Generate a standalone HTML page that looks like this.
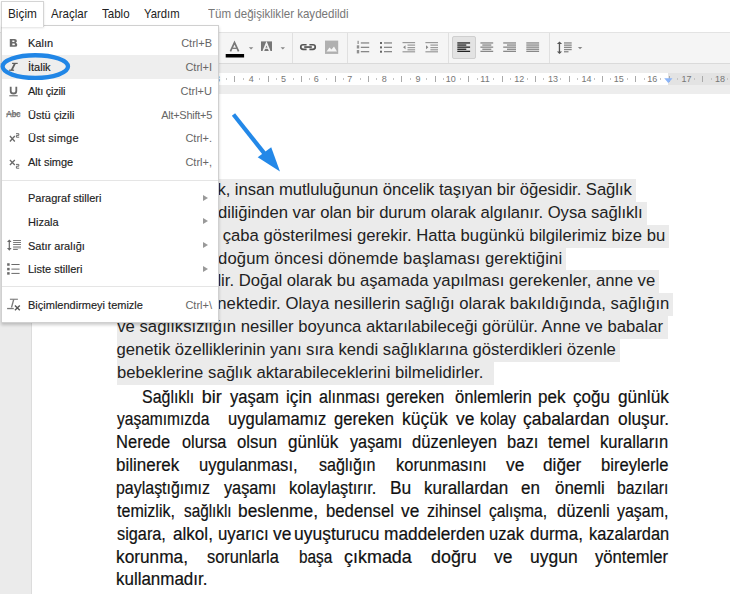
<!DOCTYPE html>
<html><head><meta charset="utf-8">
<style>
*{margin:0;padding:0;box-sizing:border-box}
html,body{width:730px;height:594px;overflow:hidden;background:#fff;position:relative;font-family:"Liberation Sans",sans-serif}
.a{position:absolute;white-space:pre}
.mb{position:absolute;white-space:pre;font-size:12.7px;line-height:16px;top:6px;color:#222;transform-origin:0 0}
#toolbar{position:absolute;left:0;top:32px;width:730px;height:32px;background:#f5f5f5;border-top:1px solid #e3e3e3;border-bottom:1px solid #dadada}
.sep{position:absolute;top:33px;width:1px;height:30px;background:#e0e0e0}
#band{position:absolute;left:0;top:64px;width:730px;height:29.5px;background:#ededed}
#ruler{position:absolute;left:117px;top:72.8px;width:551px;height:12.6px;background:#fff}
#rulerR{position:absolute;left:668px;top:72.8px;width:62px;height:12.6px;background:#e3e3e3}
#pagebg{position:absolute;left:0;top:93.5px;width:32px;height:501px;background:#ebebeb;border-right:1px solid #dcdcdc}
.rn{position:absolute;top:74px;font-size:9px;line-height:10px;color:#777;width:20px;text-align:center}
.rt{position:absolute;top:76px;width:1px;height:6px;background:#aaa}
.rd{position:absolute;top:78px;width:1px;height:2px;background:#c4c4c4}
.hl{position:absolute;left:117px;height:22.86px;background:#ebebeb}
.tl{position:absolute;font-size:16.67px;line-height:22.86px;color:#222;white-space:pre}
.w2{position:absolute;white-space:pre;font-size:18px;line-height:22.86px;color:#111;-webkit-text-stroke:0.2px #111;transform-origin:0 0}
.pl{text-align:justify;text-align-last:justify;height:22.86px}
.pl.last{text-align-last:left}
#menu{position:absolute;left:1px;top:25px;width:218px;height:298px;background:#fff;border:1px solid #d0d0d0;box-shadow:0 2px 3px rgba(0,0,0,0.2)}
#tab{position:absolute;left:1px;top:1px;width:43px;height:26px;background:#fff;border:1px solid #d4d4d4;border-bottom:none;z-index:5;box-shadow:0 1px 2px rgba(0,0,0,0.12)}
.mi{position:absolute;left:26px;font-size:11px;color:#222;line-height:14px;white-space:pre;-webkit-text-stroke:0.15px #222}
.sc{position:absolute;right:6px;font-size:11px;color:#666;line-height:14px;text-align:right;white-space:pre}
.ar{position:absolute;left:201px;width:0;height:0;border-left:5px solid #999;border-top:3px solid transparent;border-bottom:3px solid transparent}
.msep{position:absolute;left:0;width:216px;height:1px;background:#e5e5e5}
</style></head><body>
<div class="mb" style="left:51.3px;color:#222;transform:scaleX(0.91)">Araçlar</div>
<div class="mb" style="left:102px;color:#222;transform:scaleX(0.91)">Tablo</div>
<div class="mb" style="left:143.8px;color:#222;transform:scaleX(0.89)">Yardım</div>
<div class="mb" style="left:208px;color:#777;transform:scaleX(0.91)">Tüm değişiklikler kaydedildi</div>
<div id="toolbar"></div>
<div class="sep" style="left:292px"></div>
<div class="sep" style="left:347px"></div>
<div class="sep" style="left:448px"></div>
<div class="sep" style="left:549px"></div>
<div class="a" style="left:452px;top:36px;width:24px;height:23px;background:#e3e3e3;border:1px solid #cfcfcf;border-radius:2px"></div>
<svg class="a" style="left:0;top:0" width="730" height="94" viewBox="0 0 730 94"><path d="M230.4,51.3 L234.5,42.6 L238.6,51.3" fill="none" stroke="#777" stroke-width="1.7"/><path d="M232.2,48.3 H236.8" stroke="#777" stroke-width="1.3"/><rect x="225.7" y="54" width="18.4" height="3.5" fill="#000"/><polygon points="248.8,47.3 253.3,47.3 251.05,49.6" fill="#888"/><rect x="261" y="41.4" width="11" height="9.6" fill="#777"/><path d="M263.3,51 L266.5,43.2 L269.7,51" fill="none" stroke="#f3f3f3" stroke-width="1.7"/><path d="M264.8,48.2 H268.2" stroke="#f3f3f3" stroke-width="1.2"/><polygon points="280.6,47.3 285,47.3 282.8,49.6" fill="#888"/><g fill="none" stroke="#555" stroke-width="1.7"><path d="M306.6,44.75 H303.05 A2.3,2.3 0 0 0 303.05,49.35 H306.6"/><path d="M309.4,44.75 H312.95 A2.3,2.3 0 0 1 312.95,49.35 H309.4"/><path d="M304.2,47.05 H311.8"/></g><rect x="325" y="40.6" width="13.2" height="13.3" fill="#b0b0b0"/><polygon points="326.5,51.5 329.5,47.5 331.5,49.5 334,46.5 337,51.5" fill="#f5f5f5"/><g fill="#888"><rect x="360.8" y="42.3" width="8.4" height="1.3"/><rect x="360.8" y="46.7" width="8.4" height="1.3"/><rect x="360.8" y="51" width="8.4" height="1.3"/></g><g fill="#777"><rect x="357.6" y="40.8" width="1" height="3.2"/><rect x="356.8" y="45.3" width="2.4" height="3.2" opacity="0.8"/><rect x="356.8" y="50" width="2.4" height="3.4" opacity="0.8"/></g><g fill="#888"><rect x="384" y="42.3" width="8" height="1.3"/><rect x="384" y="46.7" width="8" height="1.3"/><rect x="384" y="51" width="8" height="1.3"/></g><g fill="#666"><rect x="380" y="42" width="2" height="2"/><rect x="380" y="46.4" width="2" height="2"/><rect x="380" y="50.7" width="2" height="2"/></g><g fill="#999"><rect x="402.5" y="42" width="12.6" height="1.2"/><rect x="407.5" y="44.5" width="7.6" height="1.2"/><rect x="407.5" y="47" width="7.6" height="1.2"/><rect x="407.5" y="49.2" width="7.6" height="1.2"/><rect x="402.5" y="51.2" width="12.6" height="1.2"/></g><polygon points="405.5,45.2 405.5,49.2 403.1,47.2" fill="#888"/><g fill="#999"><rect x="425.4" y="42" width="12.6" height="1.2"/><rect x="430.4" y="44.5" width="7.6" height="1.2"/><rect x="430.4" y="47" width="7.6" height="1.2"/><rect x="430.4" y="49.2" width="7.6" height="1.2"/><rect x="425.4" y="51.2" width="12.6" height="1.2"/></g><polygon points="426.0,45.2 426.0,49.2 428.4,47.2" fill="#888"/><rect x="457.30" y="42.3" width="12.8" height="1.3" fill="#222"/><rect x="457.30" y="44.4" width="9" height="1.3" fill="#222"/><rect x="457.30" y="46.5" width="12.8" height="1.3" fill="#222"/><rect x="457.30" y="48.6" width="9" height="1.3" fill="#222"/><rect x="457.30" y="50.7" width="12.8" height="1.3" fill="#222"/><rect x="480.40" y="42.3" width="12.8" height="1.3" fill="#888"/><rect x="482.30" y="44.4" width="9" height="1.3" fill="#888"/><rect x="480.40" y="46.5" width="12.8" height="1.3" fill="#888"/><rect x="482.30" y="48.6" width="9" height="1.3" fill="#888"/><rect x="480.40" y="50.7" width="12.8" height="1.3" fill="#888"/><rect x="503.20" y="42.3" width="12.8" height="1.3" fill="#888"/><rect x="507.00" y="44.4" width="9" height="1.3" fill="#888"/><rect x="503.20" y="46.5" width="12.8" height="1.3" fill="#888"/><rect x="507.00" y="48.6" width="9" height="1.3" fill="#888"/><rect x="503.20" y="50.7" width="12.8" height="1.3" fill="#888"/><rect x="526.30" y="42.3" width="12.8" height="1.3" fill="#888"/><rect x="526.30" y="44.4" width="12.8" height="1.3" fill="#888"/><rect x="526.30" y="46.5" width="12.8" height="1.3" fill="#888"/><rect x="526.30" y="48.6" width="12.8" height="1.3" fill="#888"/><rect x="526.30" y="50.7" width="12.8" height="1.3" fill="#888"/><g fill="#555"><rect x="558.8" y="43" width="1.3" height="9"/><polygon points="556.9,44 562.1,44 559.5,41.5"/><polygon points="556.9,51.5 562.1,51.5 559.5,54"/></g><g fill="#888"><rect x="564" y="42.3" width="7.7" height="1.3"/><rect x="564" y="44.5" width="7.7" height="1.3"/><rect x="564" y="46.7" width="7.7" height="1.3"/><rect x="564" y="48.9" width="7.7" height="1.3"/><rect x="564" y="51.1" width="4.5" height="1.3"/></g><polygon points="577.9,47 582.3,47 580.1,49.2" fill="#888"/></svg>
<div id="band"></div><div id="ruler"></div><div id="rulerR"></div>
<div class="rd" style="left:125.6px"></div>
<div class="rt" style="left:133.9px"></div>
<div class="rd" style="left:142.3px"></div>
<div class="rn" style="left:140.6px">1</div>
<div class="rd" style="left:159.0px"></div>
<div class="rt" style="left:167.3px"></div>
<div class="rd" style="left:175.7px"></div>
<div class="rn" style="left:174.1px">2</div>
<div class="rd" style="left:192.4px"></div>
<div class="rt" style="left:200.8px"></div>
<div class="rd" style="left:209.1px"></div>
<div class="rn" style="left:207.5px">3</div>
<div class="rd" style="left:225.8px"></div>
<div class="rt" style="left:234.2px"></div>
<div class="rd" style="left:242.6px"></div>
<div class="rn" style="left:241.2px">4</div>
<div class="rd" style="left:259.3px"></div>
<div class="rt" style="left:267.6px"></div>
<div class="rd" style="left:276.0px"></div>
<div class="rn" style="left:273.4px">5</div>
<div class="rd" style="left:292.7px"></div>
<div class="rt" style="left:301.1px"></div>
<div class="rd" style="left:309.4px"></div>
<div class="rn" style="left:306.3px">6</div>
<div class="rd" style="left:326.1px"></div>
<div class="rt" style="left:334.5px"></div>
<div class="rd" style="left:342.9px"></div>
<div class="rn" style="left:339.8px">7</div>
<div class="rd" style="left:359.6px"></div>
<div class="rt" style="left:367.9px"></div>
<div class="rd" style="left:376.3px"></div>
<div class="rn" style="left:374.2px">8</div>
<div class="rd" style="left:393.0px"></div>
<div class="rt" style="left:401.4px"></div>
<div class="rd" style="left:409.7px"></div>
<div class="rn" style="left:407.9px">9</div>
<div class="rd" style="left:426.4px"></div>
<div class="rt" style="left:434.8px"></div>
<div class="rd" style="left:443.1px"></div>
<div class="rn" style="left:440.8px">10</div>
<div class="rd" style="left:459.9px"></div>
<div class="rt" style="left:468.2px"></div>
<div class="rd" style="left:476.6px"></div>
<div class="rn" style="left:475.0px">11</div>
<div class="rd" style="left:493.3px"></div>
<div class="rt" style="left:501.6px"></div>
<div class="rd" style="left:510.0px"></div>
<div class="rn" style="left:509.3px">12</div>
<div class="rd" style="left:526.7px"></div>
<div class="rt" style="left:535.1px"></div>
<div class="rd" style="left:543.4px"></div>
<div class="rn" style="left:543.0px">13</div>
<div class="rd" style="left:560.1px"></div>
<div class="rt" style="left:568.5px"></div>
<div class="rd" style="left:576.9px"></div>
<div class="rn" style="left:576.4px">14</div>
<div class="rd" style="left:593.6px"></div>
<div class="rt" style="left:601.9px"></div>
<div class="rd" style="left:610.3px"></div>
<div class="rn" style="left:608.7px">15</div>
<div class="rd" style="left:627.0px"></div>
<div class="rt" style="left:635.4px"></div>
<div class="rd" style="left:643.7px"></div>
<div class="rn" style="left:642.2px">16</div>
<div class="rd" style="left:660.4px"></div>
<div class="rt" style="left:668.8px"></div>
<div class="rd" style="left:677.2px"></div>
<div class="rn" style="left:676.6px">17</div>
<div class="rd" style="left:693.9px"></div>
<div class="rt" style="left:702.2px"></div>
<div class="rd" style="left:710.6px"></div>
<div class="rn" style="left:710.1px">18</div>
<div class="rd" style="left:727.3px"></div>
<svg class="a" style="left:0;top:0" width="730" height="94"><polygon points="664.2,78.2 672.5,78.2 668.35,83" fill="#8ab4f8"/></svg>
<div id="pagebg"></div>
<div class="hl" style="top:179.00px;width:518.9px"></div>
<div class="hl" style="top:201.86px;width:529.9px"></div>
<div class="hl" style="top:224.72px;width:551.9px"></div>
<div class="hl" style="top:247.58px;width:449.0px"></div>
<div class="hl" style="top:270.44px;width:542.0px"></div>
<div class="hl" style="top:293.30px;width:556.2px"></div>
<div class="hl" style="top:316.16px;width:551.1px"></div>
<div class="hl" style="top:339.02px;width:502.9px"></div>
<div class="hl" style="top:361.88px;width:376.8px"></div>
<div class="tl" style="top:179.00px;left:217.38px;letter-spacing:-0.054px">k, insan mutluluğunun öncelik taşıyan bir öğesidir. Sağlık</div>
<div class="tl" style="top:201.86px;left:218.00px;letter-spacing:-0.037px">diliğinden var olan bir durum olarak algılanır. Oysa sağlıklı</div>
<div class="tl" style="top:224.72px;left:222.69px;letter-spacing:0.000px">çaba gösterilmesi gerekir. Hatta bugünkü bilgilerimiz bize bu</div>
<div class="tl" style="top:247.58px;left:218.00px;letter-spacing:0.129px">doğum öncesi dönemde başlaması gerektiğini</div>
<div class="tl" style="top:270.44px;left:217.38px;letter-spacing:-0.002px">lir. Doğal olarak bu aşamada yapılması gerekenler, anne ve</div>
<div class="tl" style="top:293.30px;left:217.29px;letter-spacing:0.063px">nektedir. Olaya nesillerin sağlığı olarak bakıldığında, sağlığın</div>
<div class="tl" style="top:316.16px;left:117.24px;letter-spacing:0.019px">ve sağlıksızlığın nesiller boyunca aktarılabileceği görülür. Anne ve babalar</div>
<div class="tl" style="top:339.02px;left:116.60px;letter-spacing:-0.010px">genetik özelliklerinin yanı sıra kendi sağlıklarına gösterdikleri özenle</div>
<div class="tl" style="top:361.88px;left:116.93px;letter-spacing:0.033px">bebeklerine sağlık aktarabileceklerini bilmelidirler.</div>
<div class="w2" style="left:142.12px;top:385.50px;transform:scaleX(0.886)">Sağlıklı</div>
<div class="w2" style="left:201.73px;top:385.50px;transform:scaleX(1.000)">bir</div>
<div class="w2" style="left:230.12px;top:385.50px;transform:scaleX(0.921)">yaşam</div>
<div class="w2" style="left:285.76px;top:385.50px;transform:scaleX(0.961)">için</div>
<div class="w2" style="left:318.76px;top:385.50px;transform:scaleX(0.895)">alınması</div>
<div class="w2" style="left:386.07px;top:385.50px;transform:scaleX(0.897)">gereken</div>
<div class="w2" style="left:454.85px;top:385.50px;transform:scaleX(0.924)">önlemlerin</div>
<div class="w2" style="left:538.29px;top:385.50px;transform:scaleX(0.947)">pek</div>
<div class="w2" style="left:573.33px;top:385.50px;transform:scaleX(0.944)">çoğu</div>
<div class="w2" style="left:617.93px;top:385.50px;transform:scaleX(0.959)">günlük</div>
<div class="w2" style="left:117.24px;top:408.36px;transform:scaleX(0.863)">yaşamımızda</div>
<div class="w2" style="left:227.54px;top:408.36px;transform:scaleX(0.918)">uygulamamız</div>
<div class="w2" style="left:334.45px;top:408.36px;transform:scaleX(0.923)">gereken</div>
<div class="w2" style="left:401.95px;top:408.36px;transform:scaleX(0.971)">küçük</div>
<div class="w2" style="left:455.70px;top:408.36px;transform:scaleX(0.969)">ve</div>
<div class="w2" style="left:479.89px;top:408.36px;transform:scaleX(0.859)">kolay</div>
<div class="w2" style="left:522.62px;top:408.36px;transform:scaleX(0.970)">çabalardan</div>
<div class="w2" style="left:617.92px;top:408.36px;transform:scaleX(0.962)">oluşur.</div>
<div class="w2" style="left:116.16px;top:431.22px;transform:scaleX(0.919)">Nerede</div>
<div class="w2" style="left:181.66px;top:431.22px;transform:scaleX(0.905)">olursa</div>
<div class="w2" style="left:237.25px;top:431.22px;transform:scaleX(0.931)">olsun</div>
<div class="w2" style="left:288.33px;top:431.22px;transform:scaleX(0.950)">günlük</div>
<div class="w2" style="left:349.83px;top:431.22px;transform:scaleX(0.901)">yaşamı</div>
<div class="w2" style="left:411.76px;top:431.22px;transform:scaleX(0.923)">düzenleyen</div>
<div class="w2" style="left:507.23px;top:431.22px;transform:scaleX(0.918)">bazı</div>
<div class="w2" style="left:548.30px;top:431.22px;transform:scaleX(0.949)">temel</div>
<div class="w2" style="left:600.21px;top:431.22px;transform:scaleX(0.920)">kuralların</div>
<div class="w2" style="left:116.30px;top:454.08px;transform:scaleX(0.944)">bilinerek</div>
<div class="w2" style="left:199.34px;top:454.08px;transform:scaleX(0.921)">uygulanması,</div>
<div class="w2" style="left:318.76px;top:454.08px;transform:scaleX(0.894)">sağlığın</div>
<div class="w2" style="left:395.52px;top:454.08px;transform:scaleX(0.915)">korunmasını</div>
<div class="w2" style="left:505.60px;top:454.08px;transform:scaleX(0.963)">ve</div>
<div class="w2" style="left:543.14px;top:454.08px;transform:scaleX(0.958)">diğer</div>
<div class="w2" style="left:601.12px;top:454.08px;transform:scaleX(0.925)">bireylerle</div>
<div class="w2" style="left:116.37px;top:476.94px;transform:scaleX(0.886)">paylaştığımız</div>
<div class="w2" style="left:224.43px;top:476.94px;transform:scaleX(0.901)">yaşamı</div>
<div class="w2" style="left:289.03px;top:476.94px;transform:scaleX(0.910)">kolaylaştırır.</div>
<div class="w2" style="left:389.78px;top:476.94px;transform:scaleX(0.968)">Bu</div>
<div class="w2" style="left:423.68px;top:476.94px;transform:scaleX(0.946)">kurallardan</div>
<div class="w2" style="left:521.43px;top:476.94px;transform:scaleX(0.943)">en</div>
<div class="w2" style="left:554.64px;top:476.94px;transform:scaleX(0.940)">önemli</div>
<div class="w2" style="left:617.49px;top:476.94px;transform:scaleX(0.871)">bazıları</div>
<div class="w2" style="left:117.22px;top:499.80px;transform:scaleX(0.891)">temizlik,</div>
<div class="w2" style="left:184.19px;top:499.80px;transform:scaleX(0.850)">sağlıklı</div>
<div class="w2" style="left:237.87px;top:499.80px;transform:scaleX(0.963)">beslenme,</div>
<div class="w2" style="left:325.71px;top:499.80px;transform:scaleX(0.930)">bedensel</div>
<div class="w2" style="left:400.90px;top:499.80px;transform:scaleX(0.963)">ve</div>
<div class="w2" style="left:426.80px;top:499.80px;transform:scaleX(0.900)">zihinsel</div>
<div class="w2" style="left:489.09px;top:499.80px;transform:scaleX(0.865)">çalışma,</div>
<div class="w2" style="left:556.66px;top:499.80px;transform:scaleX(0.922)">düzenli</div>
<div class="w2" style="left:617.43px;top:499.80px;transform:scaleX(0.886)">yaşam,</div>
<div class="w2" style="left:116.85px;top:522.66px;transform:scaleX(0.905)">sigara,</div>
<div class="w2" style="left:172.72px;top:522.66px;transform:scaleX(0.949)">alkol,</div>
<div class="w2" style="left:217.52px;top:522.66px;transform:scaleX(0.936)">uyarıcı</div>
<div class="w2" style="left:273.20px;top:522.66px;transform:scaleX(0.969)">ve</div>
<div class="w2" style="left:293.98px;top:522.66px;transform:scaleX(0.971)">uyuşturucu</div>
<div class="w2" style="left:383.75px;top:522.66px;transform:scaleX(0.961)">maddelerden</div>
<div class="w2" style="left:488.54px;top:522.66px;transform:scaleX(0.921)">uzak</div>
<div class="w2" style="left:529.65px;top:522.66px;transform:scaleX(0.945)">durma,</div>
<div class="w2" style="left:588.73px;top:522.66px;transform:scaleX(0.911)">kazalardan</div>
<div class="w2" style="left:116.26px;top:545.52px;transform:scaleX(0.959)">korunma,</div>
<div class="w2" style="left:206.54px;top:545.52px;transform:scaleX(0.909)">sorunlarla</div>
<div class="w2" style="left:299.11px;top:545.52px;transform:scaleX(0.854)">başa</div>
<div class="w2" style="left:344.40px;top:545.52px;transform:scaleX(0.997)">çıkmada</div>
<div class="w2" style="left:430.91px;top:545.52px;transform:scaleX(0.993)">doğru</div>
<div class="w2" style="left:494.30px;top:545.52px;transform:scaleX(0.969)">ve</div>
<div class="w2" style="left:529.58px;top:545.52px;transform:scaleX(0.972)">uygun</div>
<div class="w2" style="left:595.32px;top:545.52px;transform:scaleX(0.924)">yöntemler</div>
<div class="w2" style="left:116.28px;top:568.38px;transform:scaleX(0.942)">kullanmadır.</div>
<svg class="a" style="left:0;top:0" width="730" height="594"><line x1="234.8" y1="116.2" x2="265.8" y2="155.2" stroke="#2388e8" stroke-width="4.2" stroke-linecap="square"/><polygon points="257.7,157.3 271.2,147.2 280,171.4" fill="#2388e8"/></svg>
<div id="tab"><div class="mb" style="left:5.8px;top:4px;transform:scaleX(0.93)">Biçim</div></div>
<div id="menu">
<div style="position:absolute;left:0;top:29px;width:216px;height:23.5px;background:#eeeeee"></div>
<div class="mi" style="top:10.1px">Kalın</div><div class="sc" style="top:10.1px">Ctrl+B</div>
<div class="mi" style="top:33.9px">İtalik</div><div class="sc" style="top:33.9px">Ctrl+I</div>
<div class="mi" style="top:57.7px;letter-spacing:-0.23px">Altı çizili</div><div class="sc" style="top:57.7px">Ctrl+U</div>
<div class="mi" style="top:81.5px">Üstü çizili</div><div class="sc" style="top:81.5px;letter-spacing:-0.27px">Alt+Shift+5</div>
<div class="mi" style="top:105.3px;letter-spacing:0.2px">Üst simge</div><div class="sc" style="top:105.3px">Ctrl+.</div>
<div class="mi" style="top:129.1px">Alt simge</div><div class="sc" style="top:129.1px">Ctrl+,</div>
<div class="msep" style="top:153.5px"></div>
<div class="mi" style="top:164.9px">Paragraf stilleri</div><div class="ar" style="top:168.5px"></div>
<div class="mi" style="top:188.7px">Hizala</div><div class="ar" style="top:192.3px"></div>
<div class="mi" style="top:212.5px">Satır aralığı</div><div class="ar" style="top:216.1px"></div>
<div class="mi" style="top:236.3px">Liste stilleri</div><div class="ar" style="top:239.9px"></div>
<div class="msep" style="top:260.3px"></div>
<div class="mi" style="top:271.7px">Biçimlendirmeyi temizle</div><div class="sc" style="top:271.7px">Ctrl+\</div>
</div>
<svg class="a" style="left:0;top:0;z-index:10" width="730" height="594"><path fill-rule="evenodd" fill="#6a6a6a" d="M9.8,39 H14.5 Q16.9,39 16.9,40.9 Q16.9,42.2 15.7,42.75 Q17.3,43.3 17.3,44.9 Q17.3,46.8 14.8,46.8 H9.8 Z M12.3,40.5 V42.1 H14 Q14.6,42.1 14.6,41.3 Q14.6,40.5 14,40.5 Z M12.3,43.5 V45.3 H14.2 Q14.9,45.3 14.9,44.4 Q14.9,43.5 14.2,43.5 Z"/><g fill="#5e5e5e"><rect x="12.1" y="62.8" width="5.6" height="1.2"/><rect x="9.1" y="69.6" width="5" height="1.2"/><polygon points="13.9,63.5 15.9,63.5 12.6,70.2 10.6,70.2"/></g><path d="M10.7,86.7 V90.9 Q10.7,93.5 13.5,93.5 Q16.3,93.5 16.3,90.9 V86.7" fill="none" stroke="#6a6a6a" stroke-width="1.8"/><rect x="9.3" y="95" width="8.4" height="1.4" fill="#8a8a8a"/><text x="6.2" y="116.7" font-family="Liberation Sans" font-size="8.6" fill="#6a6a6a" stroke="#6a6a6a" stroke-width="0.25" textLength="14.2" lengthAdjust="spacingAndGlyphs">Abc</text><rect x="6" y="113.6" width="14.4" height="0.9" fill="#6a6a6a"/><g stroke="#6a6a6a" stroke-width="1.3" fill="none"><path d="M9.9,136 L14.8,141.5 M14.8,136 L9.9,141.5"/><path d="M9.9,160 L14.8,165 M14.8,160 L9.9,165"/></g><g stroke="#6a6a6a" stroke-width="1" fill="none"><polyline points="16,133.7 18.8,133.7 18.8,135.4 16.4,135.4 16.4,137.2 19.2,137.2"/><polyline points="16,164.4 18.8,164.4 18.8,166.2 16.4,166.2 16.4,168.2 19.2,168.2"/></g><g fill="#666"><polygon points="7,242.1 11.6,242.1 9.3,239.4"/><rect x="8.7" y="242" width="1.2" height="6.2"/><polygon points="7,248.1 11.6,248.1 9.3,250.8"/></g><g fill="#6e6e6e"><rect x="13.1" y="240" width="7.9" height="0.9"/><rect x="13.1" y="242" width="7.9" height="0.9"/><rect x="13.1" y="244" width="7.9" height="0.9"/><rect x="13.1" y="246.1" width="7.9" height="2.4" fill="#b0b0b0"/><rect x="13.1" y="249.1" width="4.7" height="0.9"/></g><g fill="#6a6a6a"><rect x="7.15" y="263.25" width="2.5" height="2.5"/><rect x="7.15" y="267.85" width="2.5" height="2.5"/><rect x="7.15" y="272.15" width="2.5" height="2.5"/><rect x="11.4" y="264" width="8.2" height="1"/><rect x="11.4" y="268.6" width="8.2" height="1"/><rect x="11.4" y="272.9" width="8.2" height="1"/></g><g fill="#7a7a7a"><rect x="9.9" y="298.7" width="8" height="1.1"/><polygon points="13,299.5 14.4,299.5 12.2,307.5 10.8,307.5"/><rect x="7.1" y="307.9" width="6.7" height="1.3"/></g><path d="M14.9,305.6 L19.8,310.3 M19.8,305.6 L14.9,310.3" stroke="#555" stroke-width="1.4"/><ellipse cx="35.3" cy="66.6" rx="32.7" ry="11.35" fill="none" stroke="#2186e6" stroke-width="4.3"/></svg>
</body></html>
